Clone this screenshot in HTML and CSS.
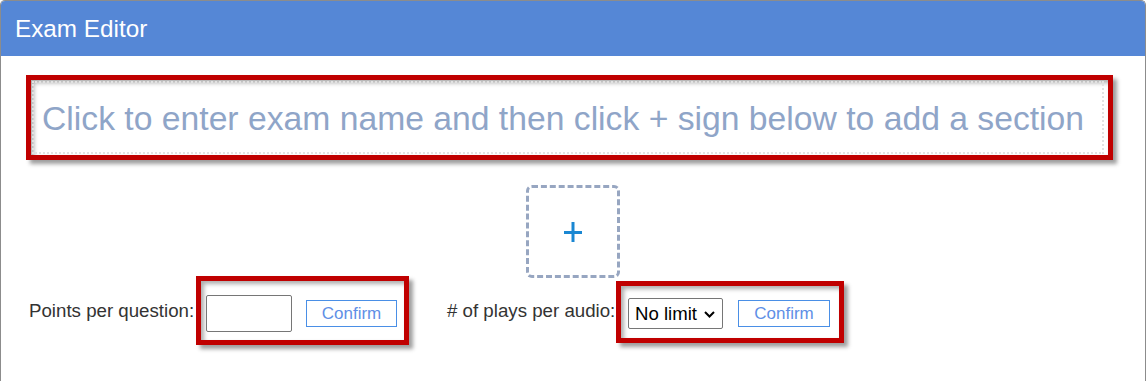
FILE: index.html
```html
<!DOCTYPE html>
<html lang="en">
<head>
<meta charset="utf-8">
<title>Exam Editor</title>
<link rel="stylesheet" href="styles.css">
</head>
<body>
<div class="panel">
  <div class="panel-header">Exam Editor</div>
  <div class="panel-body">
    <div class="annot annot-title">
      <div class="title-input">Click to enter exam name and then click + sign below to add a section</div>
    </div>
    <button class="add-section" type="button" aria-label="Add section">
      <svg width="18" height="20" viewBox="0 0 18 20"><path d="M0 10.5H18M9 0V20" stroke="#1a87d2" stroke-width="3" fill="none"/></svg>
    </button>
    <div class="settings">
      <span class="label label-points">Points per question:</span>
      <div class="annot annot-points">
        <input class="points-input" type="text">
        <button class="confirm" type="button">Confirm</button>
      </div>
      <span class="label label-plays"># of plays per audio:</span>
      <div class="annot annot-plays">
        <div class="select-wrap">
          <select class="plays-select"><option>No limit</option></select>
          <svg class="chevron" width="11" height="7" viewBox="0 0 11 7"><path d="M1 1L5.5 5.5L10 1" stroke="#000" stroke-width="2" fill="none"/></svg>
        </div>
        <button class="confirm confirm-plays" type="button">Confirm</button>
      </div>
    </div>
  </div>
</div>
</body>
</html>
```

FILE: styles.css
```css
* { box-sizing: border-box; }
html, body { margin: 0; padding: 0; background: #fff; }
body { font-family: "Liberation Sans", Arial, sans-serif; }

.panel {
  width: 1146px;
  height: 400px;
  border: 1px solid #8c8c8c;
  border-bottom: none;
  border-radius: 5px 5px 0 0;
  overflow: hidden;
}

.panel-header {
  height: 55px;
  background: #5587d6;
  color: #fff;
  font-size: 24.3px;
  padding-left: 14px;
  display: flex;
  align-items: center;
}

.panel-body {
  padding: 19px 0 0 25px;
}

.annot {
  border: 5px solid #c00000;
  box-shadow: 4px 4px 4px rgba(0, 0, 0, 0.38), inset 3px 3px 4px rgba(0, 0, 0, 0.32);
  background: #fff;
}

.annot-title {
  width: 1087px;
  height: 85px;
  padding: 1px 4px 1px 1px;
}

.title-input {
  height: 73px;
  border: 2px dotted #e2e2e2;
  display: flex;
  align-items: center;
  padding-left: 8px;
  padding-top: 1px;
  font-size: 33.7px;
  color: #8fa5c8;
  white-space: nowrap;
  overflow: hidden;
}

.add-section {
  display: flex;
  align-items: center;
  justify-content: center;
  width: 94px;
  height: 93px;
  margin: 25px 0 0 500px;
  border: 3px dashed #97a6c1;
  border-radius: 6px;
  background: #fff;
  padding: 0;
}

.settings {
  display: flex;
  align-items: center;
  margin-top: -2px;
  padding-left: 3px;
}

.label {
  font-size: 18.7px;
  color: #333;
  white-space: nowrap;
  flex: none;
}

.label-points { width: 166px; }

.annot-points {
  display: flex;
  align-items: center;
  margin-left: 1px;
  padding: 14px 7px 8px 5px;
}

.points-input {
  width: 86px;
  height: 37px;
  border: 1px solid #767676;
  border-radius: 2px;
  margin: 0 14px 0 0;
  padding: 0 4px;
  font: inherit;
}

.confirm {
  width: 91px;
  height: 27px;
  border: 1px solid #4a8fe6;
  background: #fff;
  color: #5f8fe6;
  font-family: "Liberation Sans", Arial, sans-serif;
  font-size: 17px;
  padding: 0;
  border-radius: 0;
}

.label-plays { margin-left: 38px; width: 168px; }

.annot-plays {
  display: flex;
  align-items: center;
  margin-left: 1px;
  margin-top: 3px;
  padding: 12px 9px 9px 7px;
}

.select-wrap {
  position: relative;
  margin-right: 15px;
}

.plays-select {
  appearance: none;
  -webkit-appearance: none;
  display: block;
  width: 95px;
  height: 31px;
  border: 1px solid #767676;
  border-radius: 2px;
  background: #fff;
  color: #000;
  font-family: "Liberation Sans", Arial, sans-serif;
  font-size: 18.6px;
  padding: 0 0 0 6px;
  margin: 0;
}

.chevron {
  position: absolute;
  left: 76px;
  top: 13px;
  pointer-events: none;
}

.confirm-plays { width: 92px; }
```
